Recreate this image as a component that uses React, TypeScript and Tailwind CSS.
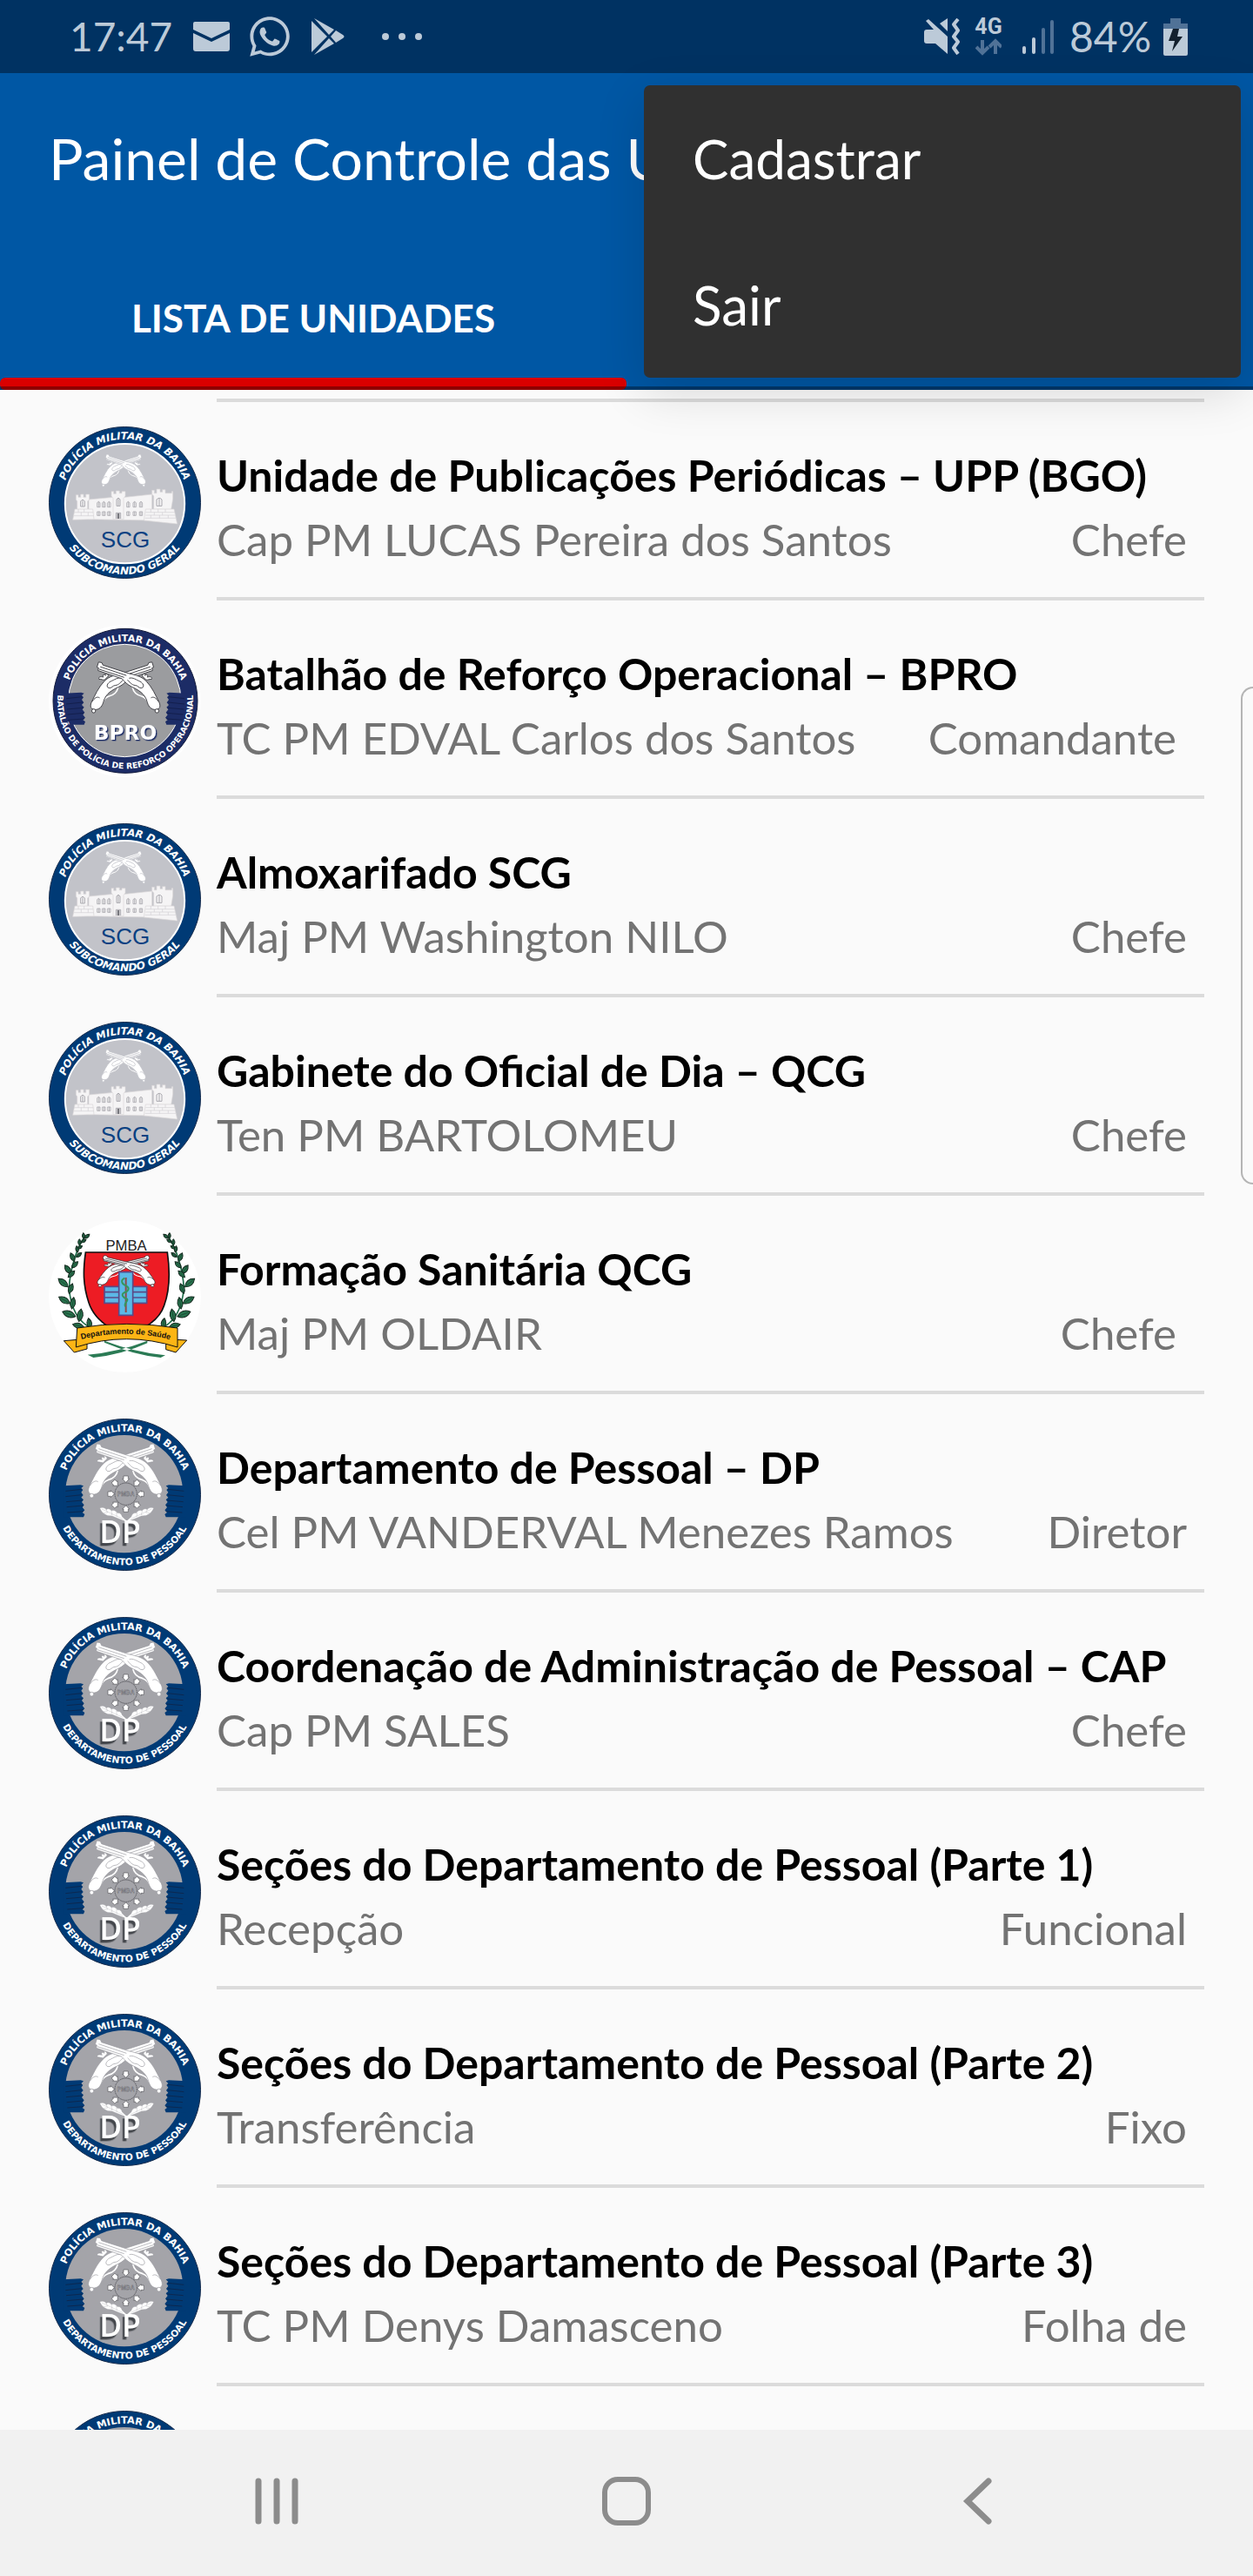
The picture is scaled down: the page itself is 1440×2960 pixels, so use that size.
import { useId } from "react";
import type { ReactNode } from "react";
import { FaWhatsapp } from "react-icons/fa";

type Badge = "scg" | "bpro" | "saude" | "dp";

interface Unit {
  badge: Badge;
  name: string;
  person: string;
  role: string;
  inset?: boolean;
}

const units: Unit[] = [
  { badge: "scg", name: "Unidade de Publicações Periódicas – UPP (BGO)", person: "Cap PM LUCAS Pereira dos Santos", role: "Chefe" },
  { badge: "bpro", name: "Batalhão de Reforço Operacional – BPRO", person: "TC PM EDVAL Carlos dos Santos", role: "Comandante", inset: true },
  { badge: "scg", name: "Almoxarifado SCG", person: "Maj PM Washington NILO", role: "Chefe" },
  { badge: "scg", name: "Gabinete do Oficial de Dia – QCG", person: "Ten PM BARTOLOMEU", role: "Chefe" },
  { badge: "saude", name: "Formação Sanitária QCG", person: "Maj PM OLDAIR", role: "Chefe", inset: true },
  { badge: "dp", name: "Departamento de Pessoal – DP", person: "Cel PM VANDERVAL Menezes Ramos", role: "Diretor" },
  { badge: "dp", name: "Coordenação de Administração de Pessoal – CAP", person: "Cap PM SALES", role: "Chefe" },
  { badge: "dp", name: "Seções do Departamento de Pessoal (Parte 1)", person: "Recepção", role: "Funcional" },
  { badge: "dp", name: "Seções do Departamento de Pessoal (Parte 2)", person: "Transferência", role: "Fixo" },
  { badge: "dp", name: "Seções do Departamento de Pessoal (Parte 3)", person: "TC PM Denys Damasceno", role: "Folha de" },
];

function Pistol({ line, width }: { line: string; width: number }) {
  return (
    <g fill="#fff" stroke={line} strokeWidth={width} strokeLinejoin="round">
      <path d="M26-66C30-44 44-36 60-32 72-28 80-20 84-6" fill="none" stroke="#fff" strokeWidth="5" />
      <path d="M-98-157L-86-155-82-146 14-115C38-110 60-104 76-88 98-66 112-34 124-10 132 10 124 18 106 17 90 14 84 2 80-12 72-42 46-56 24-66 8-74-4-86-12-96L-100-126-98-136-104-138Z" />
      <path d="M-92-140L4-108M-96-131L-4-101" fill="none" />
      <path d="M14-98C28-102 40-92 54-86 66-80 72-66 60-62 50-60 46-72 36-72 24-72 14-86 8-92M94-26C104-32 112-26 122-12" fill="none" />
      <path d="M62-106C66-116 76-120 72-108 78-114 86-110 80-102 90-104 100-104 96-94 88-96 82-90 76-92Z" />
      <circle cx="116" cy="22" r="7" />
    </g>
  );
}

interface CrossedPistolsProps {
  x: number;
  y: number;
  scaleX?: number;
  scaleY?: number;
  line?: string;
  width?: number;
}

function CrossedPistols({ x, y, scaleX = 1, scaleY = 1, line = "#98989e", width = 2 }: CrossedPistolsProps) {
  return (
    <g transform={`translate(${x} ${y}) scale(${scaleX} ${scaleY})`}>
      <g transform="scale(-1 1)">
        <Pistol line={line} width={width} />
      </g>
      <Pistol line={line} width={width} />
    </g>
  );
}

interface RingTextProps {
  cx: number;
  cy: number;
  topRadius: number;
  bottomRadius: number;
  top: string;
  bottom: string;
  topSize: number;
  bottomSize: number;
  italic?: boolean;
}

function RingText({ cx, cy, topRadius: a, bottomRadius: b, top, bottom, topSize, bottomSize, italic }: RingTextProps) {
  const id = useId();
  return (
    <g fill="#fff" fontFamily="DejaVu Sans, sans-serif" fontWeight={700} fontStyle={italic ? "italic" : "normal"} textAnchor="middle">
      <path id={`${id}t`} fill="none" d={`M${cx} ${cy + a}A${a} ${a} 0 0 1 ${cx} ${cy - a}A${a} ${a} 0 0 1 ${cx} ${cy + a}`} />
      <path id={`${id}b`} fill="none" d={`M${cx} ${cy - b}A${b} ${b} 0 0 0 ${cx} ${cy + b}A${b} ${b} 0 0 0 ${cx} ${cy - b}`} />
      <text fontSize={topSize}>
        <textPath href={`#${id}t`} startOffset="50%">{top}</textPath>
      </text>
      <text fontSize={bottomSize}>
        <textPath href={`#${id}b`} startOffset="50%">{bottom}</textPath>
      </text>
    </g>
  );
}

function ScgBadge() {
  const windows = [220, 238, 256, 322, 344, 366];
  return (
    <svg viewBox="48 60 525 525" className="size-full" aria-hidden="true">
      <circle cx="310.500" cy="322.500" r="261" fill="#003a75" stroke="#13294a" strokeWidth="3" />
      <circle cx="310.500" cy="326" r="206" fill="#c2c3c9" stroke="#fff" strokeWidth="6" />
      <RingText cx={310} cy={322} topRadius={218} bottomRadius={248} top="POLÍCIA MILITAR DA BAHIA" bottom="SUBCOMANDO GERAL" topSize={35} bottomSize={36} italic />
      <CrossedPistols x={306} y={250} scaleX={0.6} scaleY={0.6} line="#c2c3c9" width={4} />
      <g fill="#f5f4f5" stroke="#d9d6d8" strokeWidth="2">
        <path d="M186 312L272 304 312 304 404 294 404 384 186 380Z" />
        <path d="M142 312H142V296H150V304H158V294H168V304H176V294H188V312L182 318V348H146V318Z" />
        <path d="M264 284H272V292H280V282H292V290H300V284H312V300L306 308V380H270V308L264 300Z" />
        <path d="M404 280H412V290H420V276H432V286H440V278H450V290H472V284H476V310L470 346H410V300L404 294Z" />
        <path d="M138 345L200 345 204 380 131 382Z" />
        <path d="M382 345L480 345 491 396 376 384Z" />
      </g>
      <path d="M136 356H202M134 368H203M382 356H482M382 366H484M380 376H487M150 345V356M170 345V356M160 356V368M184 356V368M400 345V356M425 345V356M450 345V356M412 356V366M440 356V366M400 366V376M430 366V376M460 366V376" stroke="#d2d0d3" strokeWidth="2" />
      {windows.map((x) => (
        <g key={x} fill="none" stroke="#a9a8ae" strokeWidth="2.500">
          <path d={`M${x - 5} 338V324Q${x} 314 ${x + 5} 324V338ZM${x} 320V338`} />
          <path d={`M${x - 5} 354H${x + 5}V367H${x - 5}ZM${x} 354V367`} />
        </g>
      ))}
      <path d="M282 334V312Q288 302 294 312V334ZM288 308V334M158 336V318Q165 308 172 318V336ZM165 316V336M420 334V312Q430 302 438 312V334ZM429 308V334M280 378V358H296V378" fill="none" stroke="#aaa9af" strokeWidth="3" />
      <path d="M284 378V360H292V378Z" fill="#77777d" />
      <text x="312" y="478" fontSize="78" fontFamily="Liberation Sans, sans-serif" fill="#0a4182" textAnchor="middle">SCG</text>
    </svg>
  );
}

function Sleeves({ x, y, fill, line }: { x: number; y: number; fill: string; line: string }) {
  return (
    <g transform={`translate(${x} ${y})`}>
      {[-1, 1].map((side) => (
        <g key={side} transform={`scale(${side} 1)`}>
          <path d="M142 0L152-3 212 0V108H142L138 98 146 92 138 84 146 74 140 66 148 56 142 48 150 40 143 32 150 22 144 14 150 8Z" fill={fill} />
          <path d="M148 12L204 18M148 31L204 37M146 50L202 55M144 68L200 73M142 88L198 92" stroke={line} strokeWidth="3" />
        </g>
      ))}
    </g>
  );
}

function BproBadge() {
  return (
    <svg viewBox="48 54 525 525" className="size-full" aria-hidden="true">
      <circle cx="310.500" cy="316.500" r="262" fill="#fff" />
      <circle cx="312" cy="316" r="249" fill="#1c2c66" stroke="#131b3b" strokeWidth="3" />
      <circle cx="310" cy="315" r="194" fill="#9b9c9f" stroke="#fff" strokeWidth="3" />
      <Sleeves x={312} y={290} fill="#1c2c66" line="#131f4d" />
      <RingText cx={312} cy={316} topRadius={205} bottomRadius={234} top="POLÍCIA MILITAR DA BAHIA" bottom="BATALÃO DE POLÍCIA DE REFORÇO OPERACIONAL" topSize={33} bottomSize={28} />
      <CrossedPistols x={312} y={330} scaleX={0.94} scaleY={0.94} line="#3b3b40" width={3} />
      <text x="312" y="449" fill="#fff" fontFamily="DejaVu Sans, sans-serif" fontWeight={700} fontSize="70" textAnchor="middle" className="[filter:drop-shadow(4px_4px_0_#1c2c66)]">BPRO</text>
    </svg>
  );
}

function DpBadge() {
  return (
    <svg viewBox="48 60 525 525" className="size-full" aria-hidden="true">
      <circle cx="310.500" cy="322.500" r="261" fill="#003a75" stroke="#13294a" strokeWidth="3" />
      <circle cx="308" cy="320" r="203" fill="#a4a4a9" />
      <Sleeves x={310} y={292} fill="#003a75" line="#0c2850" />
      <RingText cx={310} cy={322} topRadius={218} bottomRadius={243} top="POLÍCIA MILITAR DA BAHIA" bottom="DEPARTAMENTO DE PESSOAL" topSize={34} bottomSize={32} />
      <CrossedPistols x={312} y={304} />
      <g transform="translate(314 320)">
        <circle r="38" fill="none" stroke="#55555b" strokeWidth="3" strokeDasharray="4 2" />
        {[0, 45, 90, 135, 180, 225, 270, 315].map((angle) => (
          <path key={angle} transform={`rotate(${angle})`} d="M-8-62H8V-52H12L0-40-12-52H-8Z" fill="#fff" stroke="#56565b" strokeWidth="2" />
        ))}
        <text y="8" fontSize="20" fontFamily="Liberation Sans, sans-serif" fontWeight={700} textAnchor="middle" fill="#b9b9be" stroke="#505056" strokeWidth="1">PMBA</text>
      </g>
      <g fill="#fff" stroke="#a4a4a9" strokeWidth="1">
        {[-1, 1].map((side) => (
          <g key={side} transform={`translate(317 372) scale(${side} 1)`}>
            <path d="M-4 44C16 40 34 30 50 24 66 24 82 20 93-3 82-8 74-2 70 2 64-4 56 2 52 6 44 2 36 8 32 14 24 12 18 18 16 26Z" />
            <path d="M14 34L86 0M34 27L36 12M50 20L54 4M66 12L72 0M50 20L64 24M66 12L80 14" fill="none" />
          </g>
        ))}
      </g>
      <text x="294" y="489" fill="#fff" fontFamily="Open Sans, sans-serif" fontWeight={600} fontSize="106" textAnchor="middle" className="[filter:drop-shadow(-7px_10px_0_#44474c)]">DP</text>
    </svg>
  );
}

const leaves: [number, number, number, number][] = [
  [180, 92, 50, 11], [168, 90, -5, 10], [168, 108, 60, 10], [154, 112, 0, 11], [155, 130, 60, 10], [146, 136, -10, 11],
  [152, 156, 50, 12], [130, 164, -25, 16], [138, 190, 45, 15], [114, 206, -35, 18], [126, 222, 45, 16], [98, 252, -50, 22],
  [124, 272, 20, 18], [102, 312, -60, 22], [131, 322, 10, 20], [118, 360, -70, 24], [156, 364, 10, 22], [150, 400, -75, 20], [188, 392, -10, 18],
];

function SaudeBadge() {
  const id = useId();
  return (
    <svg viewBox="48 36 525 525" className="size-full" aria-hidden="true">
      <circle cx="310.500" cy="298.500" r="262" fill="#fff" />
      {["", "translate(632 0) scale(-1 1)"].map((mirror) => (
        <g key={mirror} transform={mirror}>
          <path d="M172 94C146 130 122 200 118 270 124 340 150 390 200 410" fill="none" stroke="#1d6b48" strokeWidth="5" />
          {leaves.map(([x, y, angle, size]) => (
            <g key={`${x}-${y}`} transform={`translate(${x} ${y}) rotate(${angle})`}>
              <path d={`M0 ${-size}Q${size * 0.9} 0 0 ${size}Q${-size * 0.9} 0 0 ${-size}Z`} fill="#26734d" stroke="#15291f" strokeWidth="3" />
              <path d={`M0 ${-size * 0.7}V${size * 0.7}`} stroke="#15291f" strokeWidth="1.500" />
            </g>
          ))}
        </g>
      ))}
      <path d="M240 452Q340 490 450 502L434 510Q340 500 240 458Z M388 452Q290 490 182 500L202 510Q300 500 388 460Z" fill="#2b7b55" />
      <text x="315" y="141" fontFamily="Liberation Sans, sans-serif" fontSize="50" fill="#222" textAnchor="middle">PMBA</text>
      <path d="M175 147H457C466 210 468 270 446 330 430 380 380 410 316 434 252 410 204 376 186 320 166 260 166 210 175 147Z" fill="#ed1c24" stroke="#111" strokeWidth="5" />
      <CrossedPistols x={315} y={249} scaleX={0.78} scaleY={0.58} line="#28282c" width={3} />
      <g fill="#5cb8e6" stroke="#5b4a86" strokeWidth="5">
        <path d="M240 265H386V284H240ZM240 284H386V303H240ZM240 303H386V322H240Z" />
        <path d="M290 215H338V364H290Z" />
      </g>
      <path d="M314 234V354" stroke="#8d4c4c" strokeWidth="6" />
      <path d="M310 236C294 244 300 256 314 262 330 270 322 282 308 286 296 292 304 304 318 308 324 316 306 320 312 334" fill="none" stroke="#36965c" strokeWidth="6" />
      <g fill="#fdb515" stroke="#111" strokeWidth="3">
        <path d="M148 448L100 452 136 492 180 480V462Z" />
        <path d="M486 448L524 450 486 492 452 482V460Z" />
        <path d="M146 408Q316 380 492 408V474Q316 418 142 474Z" />
      </g>
      <path id={`${id}r`} d="M150 450Q316 404 490 454" fill="none" />
      <text fontFamily="Liberation Sans, sans-serif" fontWeight={700} fontSize="27" fill="#111" textAnchor="middle">
        <textPath href={`#${id}r`} startOffset="48%">Departamento de Saúde</textPath>
      </text>
    </svg>
  );
}

const badges: Record<Badge, () => ReactNode> = {
  scg: ScgBadge,
  bpro: BproBadge,
  saude: SaudeBadge,
  dp: DpBadge,
};

function BadgeIcon({ badge }: { badge: Badge }) {
  const Art = badges[badge];
  return (
    <div className="mt-7 size-[175px] shrink-0">
      <Art />
    </div>
  );
}

function StatusBar() {
  return (
    <div className="flex h-[84px] shrink-0 items-center bg-[#003262] pr-[75px] pl-20 text-[#bccad8]">
      <span className="w-[142px] text-[46px] leading-none">17:47</span>
      <svg viewBox="0 0 42 34" className="h-[34px] w-[42px]" fill="currentColor" aria-hidden="true">
        <path d="M2 0H40Q42 0 42 2V9L21 19 0 9V2Q0 0 2 0ZM0 13L21 23 42 13V31Q42 34 39 34H3Q0 34 0 31Z" />
      </svg>
      <FaWhatsapp className="ml-[20px] size-[52px]" aria-hidden="true" />
      <svg viewBox="0 0 38 42" className="ml-[22px] h-[42px] w-[38px]" fill="currentColor" aria-hidden="true">
        <path d="M0 3L18 21 0 39ZM3 0L26 13 20 19ZM3 42L26 29 20 23ZM28 14L36 19Q39 21 36 23L28 28 22 21Z" />
      </svg>
      <svg viewBox="0 0 48 10" className="ml-[42px] h-[10px] w-[48px]" fill="currentColor" aria-hidden="true">
        <circle cx="5" cy="5" r="4" />
        <circle cx="24" cy="5" r="4" />
        <circle cx="43" cy="5" r="4" />
      </svg>
      <div className="ml-auto flex items-center">
        <svg viewBox="0 0 42 42" className="size-[42px]" fill="currentColor" aria-hidden="true">
          <path d="M2 3L5 1 27 21V41L13 29H3Q0 29 0 26V16Q0 13 3 13H11ZM18 6L27 0V15Z" />
          <path d="M39 1L34 7 39 14 34 21 39 27 34 34 39 41" fill="none" stroke="currentColor" strokeWidth="4" strokeLinejoin="round" />
        </svg>
        <div className="ml-3 flex w-[40px] flex-col items-center gap-1">
          <span className="font-[Roboto] text-[25px] leading-[19px] font-bold">4G</span>
          <svg viewBox="0 0 30 20" className="h-[20px] w-[30px] text-[#507297]" fill="none" stroke="currentColor" strokeWidth="4" aria-hidden="true">
            <path d="M8 2V16M1 10L8 17 15 10M23 18V4M16 10L23 3 30 10" />
          </svg>
        </div>
        <svg viewBox="0 0 36 40" className="ml-[19px] h-[40px] w-[36px]" strokeWidth="4" strokeLinecap="round" aria-hidden="true">
          <path d="M2 33V38M13 23V38" stroke="#bccad8" />
          <path d="M24 12V38M34 3V38" stroke="#507297" />
        </svg>
        <span className="ml-[18px] w-[100px] text-[48px] leading-none">84%</span>
        <svg viewBox="0 0 28 43" className="ml-2 h-[43px] w-[28px]" aria-hidden="true">
          <path d="M8 0H20V6H28V14H0V6H8Z" fill="#507297" />
          <path d="M0 12H28V41Q28 43 26 43H2Q0 43 0 41Z" fill="#bccad8" />
          <path d="M11 12H18L16 21H22L10 38 13 26H6Z" fill="#13202e" />
        </svg>
      </div>
    </div>
  );
}

export default function App() {
  return (
    <div className="relative flex h-screen flex-col overflow-hidden bg-[#fafafa] font-[Lato,sans-serif]">
      <StatusBar />
      <header className="relative shrink-0 bg-[#0057a4] text-white after:absolute after:inset-x-0 after:bottom-0 after:h-1 after:bg-black/35 after:content-['']">
        <h1 className="overflow-hidden pt-14 pl-14 text-[66px] leading-[84px] whitespace-nowrap">Painel de Controle das Unidades</h1>
        <div role="tablist" className="mt-14 flex">
          <button role="tab" aria-selected="true" className="flex w-1/2 flex-col text-center text-[44px] font-bold">
            <span className="block w-full pt-4 leading-[138px]">LISTA DE UNIDADES</span>
            <span className="block h-[14px] w-full rounded-md bg-[#da0000]" />
          </button>
        </div>
      </header>

      <div role="menu" className="absolute top-[98px] right-[14px] z-10 w-[686px] rounded-[7px] bg-[#303030] text-white shadow-[0_16px_56px_rgba(0,0,0,0.14)]">
        <button role="menuitem" className="block h-[168px] w-full px-14 text-left text-[62px]">Cadastrar</button>
        <button role="menuitem" className="block h-[168px] w-full px-14 text-left text-[62px]">Sair</button>
      </div>

      <main className="min-h-0 flex-1 overflow-hidden pt-[10px]">
        <div className="mr-14 ml-[249px] h-1 bg-[#dbdbdb]" />
        <ul>
          {units.map((unit) => (
            <li key={unit.name} className="flex gap-[18px] px-14">
              <BadgeIcon badge={unit.badge} />
              <div className="min-w-0 flex-1 border-b-4 border-[#dbdbdb] pt-12 pb-[30px] whitespace-nowrap">
                <h2 className="text-[50px] leading-[73px] font-bold text-black">{unit.name}</h2>
                <p className={`flex justify-between text-[51px] leading-[73px] text-[#737373] ${unit.inset ? "pr-8" : "pr-5"}`}>
                  <span>{unit.person}</span>
                  <span>{unit.role}</span>
                </p>
              </div>
            </li>
          ))}
          <li className="flex px-14">
            <BadgeIcon badge="dp" />
          </li>
        </ul>
      </main>

      <div className="absolute top-[789px] right-0 h-[572px] w-[14px] rounded-l-[14px] border-2 border-r-0 border-[#b4b4b4] bg-[#fafafa]" />

      <nav className="flex h-[168px] shrink-0 items-center justify-center bg-[#f1f1f1] pb-[5px] text-[#8c8c8c]">
        <button aria-label="Recentes" className="flex w-[402px] justify-center">
          <svg viewBox="0 0 58 58" className="size-[58px]" stroke="currentColor" strokeWidth="7" strokeLinecap="round" aria-hidden="true">
            <path d="M8 6V52M29 6V52M50 6V52" />
          </svg>
        </button>
        <button aria-label="Início" className="flex w-[402px] justify-center">
          <svg viewBox="0 0 58 58" className="size-[58px]" fill="none" stroke="currentColor" strokeWidth="6" aria-hidden="true">
            <rect x="4" y="4" width="50" height="50" rx="15" />
          </svg>
        </button>
        <button aria-label="Voltar" className="flex w-[402px] justify-center">
          <svg viewBox="0 0 58 58" className="size-[58px]" fill="none" stroke="currentColor" strokeWidth="7" strokeLinecap="round" strokeLinejoin="miter" aria-hidden="true">
            <path d="M43 6L19 29 43 52" />
          </svg>
        </button>
      </nav>
    </div>
  );
}
